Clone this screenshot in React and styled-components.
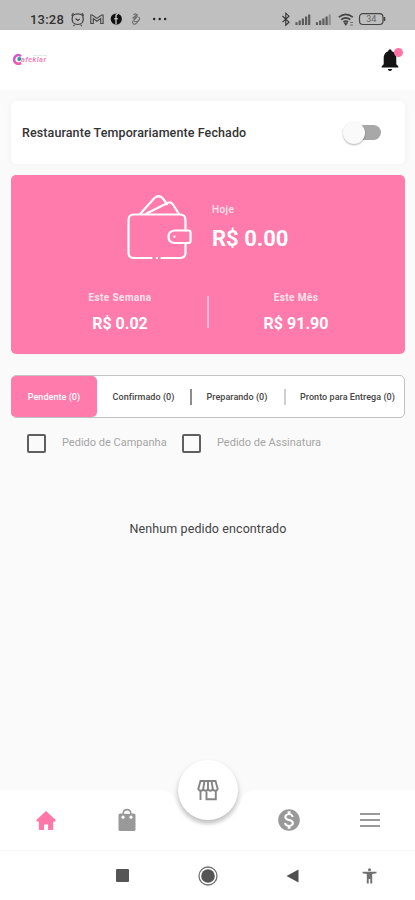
import styled, { createGlobalStyle } from "styled-components";
import { MdMonetizationOn } from "react-icons/md";

const App = () => {
  return (
    <>
      <GlobalStyle />
      <Screen>
        <StatusBar>
          <Clock>13:28</Clock>
          <StatusIcons />
        </StatusBar>
        <Header>
          <Logo />
          <Notification>
            <Bell />
            <Badge />
          </Notification>
        </Header>
        <Content>
          <ClosedCard>
            <span>Restaurante Temporariamente Fechado</span>
            <Switch>
              <Thumb />
            </Switch>
          </ClosedCard>
          <Wallet>
            <Today>
              <WalletIcon />
              <TodayInfo>
                <Label>Hoje</Label>
                <TodayValue>R$ 0.00</TodayValue>
              </TodayInfo>
            </Today>
            <Periods>
              <Period>
                <Label $bold>Este Semana</Label>
                <Value>R$ 0.02</Value>
              </Period>
              <Divider />
              <Period>
                <Label $bold>Este Mês</Label>
                <Value>R$ 91.90</Value>
              </Period>
            </Periods>
          </Wallet>
          <Tabs>
            <Tab $active $width={86}>Pendente (0)</Tab>
            <Tab $width={93}>Confirmado (0)</Tab>
            <Tab $width={94} $line="#8c8c8c">Preparando (0)</Tab>
            <Tab $width={127} $line="#cfcfcf">Pronto para Entrega (0)</Tab>
          </Tabs>
          <Filters>
            <Filter $width={155}>
              <Box />
              <span>Pedido de Campanha</span>
            </Filter>
            <Filter $width={150}>
              <Box />
              <span>Pedido de Assinatura</span>
            </Filter>
          </Filters>
          <Empty>Nenhum pedido encontrado</Empty>
        </Content>
        <BottomNav>
          <NavShape />
          <NavItem $active>
            <HomeIcon />
          </NavItem>
          <NavItem>
            <BagIcon />
          </NavItem>
          <NavItem />
          <NavItem>
            <MdMonetizationOn size={26} />
          </NavItem>
          <NavItem>
            <MenuIcon />
          </NavItem>
          <StoreButton>
            <StoreIcon />
          </StoreButton>
        </BottomNav>
        <SystemNav>
          <svg width="13" height="13">
            <rect width="13" height="13" rx="1" fill="#555" />
          </svg>
          <svg width="20" height="20">
            <circle cx="10" cy="10" r="9" fill="none" stroke="#707070" strokeWidth="1.3" />
            <circle cx="10" cy="10" r="6.800" fill="#555" />
          </svg>
          <svg width="13" height="14">
            <path d="M12.5 .5v13L.5 7z" fill="#505050" />
          </svg>
          <svg width="15" height="16" fill="#707070">
            <circle cx="7.5" cy="1.700" r="1.500" />
            <path d="M.5 3.800h14v1.500l-4.300.6v9.600H8.300V11H6.700v4.500H4.800V5.900L.5 5.300z" />
          </svg>
        </SystemNav>
      </Screen>
    </>
  );
};
export default App;

const StatusIcons = () => (
  <svg width="350" height="18" viewBox="65 10 350 18" fill="none" stroke="#444" strokeWidth="1.1">
    {/* alarm */}
    <path d="M72.800 15.500q-1.500 4 .2 7 1.700 2 4.700 2t4.700-2q1.700-3 .2-7-2-1.600-4.900-1.600t-4.900 1.600zM71.500 15.500l2-2.300M83.800 15.500l-2-2.300M74.500 25l-1 1M80.800 25l1 1M75.500 18.500l2.300 2 2-1.500" />
    {/* mail */}
    <path d="M90.800 15v8.500h2.500v-5l3.600 2.800 3.800-2.800v5h2.400V15h-1.500l-4.700 3.400-4.600-3.400z" />
    <circle cx="116.300" cy="19" r="5.600" fill="#111" stroke="none" />
    <path d="M116 24v-8q0-2 2-2M114.200 18.800h3.500" stroke="#bfbfbf" strokeWidth="1.4" />
    {/* linked loops */}
    <path d="M133.500 15q1.500-2 3-.5t0 3l-3 3M138.500 17q2 1.500.5 3l-3 3.500q-2 1.500-3 0t.3-2.800M132.500 18.300l5-4M134 21.500h4M136 16.500l-2.500 2" stroke="#707070" strokeWidth="1.200" />
    <g fill="#222" stroke="none">
      <circle cx="154.200" cy="19" r="1.200" />
      <circle cx="159.700" cy="19" r="1.200" />
      <circle cx="165.200" cy="19" r="1.200" />
    </g>
    {/* bluetooth */}
    <path d="M282.500 16l6.500 6.200-3.200 3V13.200l3.200 3-6.500 6" stroke="#333" />
    <g stroke="#5c5c5c" strokeWidth="2.200">
      <path d="M296.500 22.300V25M299.700 20.500V25M302.900 18.500V25M306.100 16.500V25M309.200 14.500V25" />
      <path d="M317 22.300V25M320.200 20.500V25M323.400 18.500V25M326.600 16.500V25" />
      <path d="M329.700 14.500V25" stroke="#909090" />
    </g>
    {/* wifi */}
    <path d="M338.800 17.200q7-5.600 14 0M341.200 19.700q4.600-3.700 9.200 0M343.500 22q2.400-1.800 4.600 0" stroke="#444" strokeWidth="1.700" />
    <path d="M344.500 23h2.600l-1.300 2z" fill="#444" />
    <path d="M350 22.500h3M350 25h3" stroke="#777" />
    {/* battery */}
    <rect x="359.500" y="13.700" width="23.500" height="10.800" rx="3.500" stroke="#444" strokeWidth="1.200" />
    <path d="M384.500 17v4" stroke="#444" strokeWidth="1.600" />
    <text x="371.300" y="22.400" fontSize="9" fontFamily="Roboto, sans-serif" textAnchor="middle" fill="#666" stroke="none">
      34
    </text>
  </svg>
);

const Logo = () => (
  <svg width="37" height="14" viewBox="0 0 37 14">
    <path d="M9 3.200Q6.500.8 3.800 3 .8 6 3 9.200q2.500 2.800 6 .8" fill="none" stroke="#d05ac6" strokeWidth="2.500" />
    <path d="M3 9.200q2.500 2.800 6 .8" fill="none" stroke="#f25ba8" strokeWidth="2.200" />
    <circle cx="7.300" cy="5.900" r="2" fill="#2f8fa8" />
    <path d="M21 2.500h14" stroke="#d8ece9" strokeWidth="1" />
    <text x="9" y="9.200" fontFamily="Roboto, sans-serif" fontSize="7.500" fontStyle="italic" fontWeight="500" fill="#ec77b4" textLength="25">
      afeklar
    </text>
  </svg>
);

const Bell = () => (
  <svg width="18" height="23" viewBox="0 0 18 23" fill="#141414">
    <path d="M9 .3q1.600 0 1.800 2 4.500 1.300 4.500 7v6l2 2v1.200H.7v-1.200l2-2v-6q0-5.700 4.500-7 .2-2 1.800-2z" />
    <path d="M6.700 20h4.600q-.6 2-2.300 2t-2.300-2z" />
  </svg>
);

const WalletIcon = () => (
  <svg width="66" height="66" viewBox="126 194 66 66" fill="none" stroke="#fff" strokeWidth="2.200" strokeLinecap="round" strokeLinejoin="round">
    <path d="M151.500 258H134q-5.500 0-5.500-5.500V220q0-5.500 5.500-5.500h46q5.500 0 5.500 5.500v10.500M185.500 243v9.500q0 5.500-5.500 5.500h-18.500M156.800 258h.3" />
    <path d="M174.500 230.500h14q2 0 2 2v8.500q0 2-2 2h-14q-6-.5-6-6.200t6-6.300zM174.300 236.700h.2" />
    <path d="M140.500 213.500l14-15.500q4.300-3.500 8 0l4.500 6M146.500 213.500l21.500-10.700q3-1.200 5 1.700l6 9.500" />
  </svg>
);

const HomeIcon = () => (
  <svg width="20" height="19" viewBox="0 0 20 19" fill="currentColor">
    <path d="M10 0l10 9.200-1 1.200h-1.800V18q0 1-1 1h-4.100v-5.500H8V19H3.800q-1 0-1-1v-7.600H1L0 9.200z" />
  </svg>
);

const BagIcon = () => (
  <svg width="20" height="24" viewBox="0 0 20 24">
    <path d="M3 5.500h14q1.500 0 1.500 1.500v14.500q0 1.500-1.500 1.500H3q-1.500 0-1.500-1.500V7Q1.500 5.500 3 5.500z" fill="#999" />
    <path d="M6.300 8V5.500q0-3.800 3.700-3.800t3.700 3.800V8" fill="none" stroke="#999" strokeWidth="1.800" />
    <path d="M7.200 5.700q0-2.300 2.800-2.300t2.800 2.300z" fill="#fff" />
    <circle cx="6" cy="9.200" r="1.600" fill="#fff" />
    <circle cx="14" cy="9.200" r="1.600" fill="#fff" />
  </svg>
);

const MenuIcon = () => (
  <svg width="20" height="16" fill="none" stroke="#999" strokeWidth="1.900">
    <path d="M0 2h20M0 8h20M0 14h20" />
  </svg>
);

const StoreIcon = () => (
  <svg width="22" height="22" viewBox="0 0 22 22" fill="none" stroke="#858585" strokeWidth="1.900">
    <path d="M3.500 2h15l2.200 8q-.8 1.800-2.400 1.800T15.800 10q-.8 1.800-2.400 1.800T11 10q-.8 1.800-2.400 1.800T6.200 10q-.8 1.800-2.400 1.800T1.300 10zM7.500 2L6.200 10M11 2V10M14.500 2l1.300 8" />
    <path d="M3.500 12v9M9.500 12.500v7.700h9.300V12" />
  </svg>
);

const NavShape = () => (
  <NavBackground width="415" height="60" viewBox="0 0 415 60">
    <path d="M0 0h159q11 0 15 8 9 27 34 27t34-27q4-8 15-8h158v60H0z" fill="#fff" />
  </NavBackground>
);

const GlobalStyle = createGlobalStyle`
  * {
    box-sizing: border-box;
  }
  body {
    margin: 0;
    background-color: #fafafa;
    font-family: Roboto, sans-serif;
  }
`;
const Screen = styled.div`
  width: 415px;
  height: 900px;
  display: flex;
  flex-direction: column;
  overflow: hidden;
  background-color: #fafafa;
`;
const StatusBar = styled.div`
  height: 30px;
  flex-shrink: 0;
  padding-top: 10px;
  padding-left: 30px;
  display: flex;
  background-color: #bfbfbf;
`;
const Clock = styled.span`
  width: 35px;
  flex-shrink: 0;
  font-size: 13px;
  font-weight: 500;
  line-height: 19px;
  letter-spacing: 0.2px;
  color: #333;
`;
const Header = styled.div`
  height: 60px;
  flex-shrink: 0;
  padding: 0 16px 0 12px;
  display: flex;
  justify-content: space-between;
  align-items: center;
  background-color: #fff;
`;
const Notification = styled.div`
  position: relative;
  height: 23px;
`;
const Badge = styled.div`
  position: absolute;
  top: -1px;
  right: -4px;
  width: 9px;
  height: 9px;
  border-radius: 50%;
  background-color: #ff73a5;
`;
const Content = styled.div`
  flex: 1;
  padding: 11px 10px 0 11px;
`;
const ClosedCard = styled.div`
  height: 63px;
  padding: 0 24px 0 11px;
  display: flex;
  justify-content: space-between;
  align-items: center;
  border-radius: 5px;
  background-color: #fff;
  box-shadow: 0 0 7px rgba(0, 0, 0, 0.04);
  font-size: 12.5px;
  color: #333;
  span {
    font-weight: 500;
    letter-spacing: 0.1px;
  }
`;
const Switch = styled.div`
  width: 33px;
  height: 15px;
  display: flex;
  align-items: center;
  border-radius: 8px;
  background-color: #a8a8a8;
`;
const Thumb = styled.div`
  width: 22px;
  height: 22px;
  flex-shrink: 0;
  margin-left: -5px;
  border-radius: 50%;
  background-color: #fafafa;
  box-shadow: 0 1px 2px rgba(0, 0, 0, 0.3);
`;
const Wallet = styled.div`
  height: 179px;
  margin-top: 11px;
  padding-top: 19px;
  border-radius: 5px;
  background-color: #ff7bab;
  color: #fff;
`;
const Today = styled.div`
  display: flex;
  padding-left: 115px;
`;
const TodayInfo = styled.div`
  padding-top: 9px;
  padding-left: 20px;
`;
const Label = styled.div`
  font-size: 10px;
  line-height: 14px;
  font-weight: ${({ $bold }) => ($bold ? 700 : 500)};
  letter-spacing: 0.4px;
  color: #ffe2ed;
`;
const TodayValue = styled.div`
  margin-top: 8px;
  font-size: 22px;
  line-height: 28px;
  font-weight: 700;
`;
const Periods = styled.div`
  margin-top: 31px;
  display: flex;
  justify-content: center;
`;
const Period = styled.div`
  width: 174px;
  text-align: center;
`;
const Value = styled.div`
  margin-top: 8px;
  font-size: 16px;
  line-height: 21px;
  font-weight: 700;
`;
const Divider = styled.div`
  width: 2px;
  height: 32px;
  margin-top: 5px;
  background-color: #ffb9d2;
`;
const Tabs = styled.div`
  height: 43px;
  margin-top: 21px;
  display: flex;
  border: 1px solid #c2c2c2;
  border-radius: 5px;
  background-color: #fff;
`;
const Tab = styled.div`
  width: ${({ $width }) => $width}px;
  flex-shrink: 0;
  margin-left: ${({ $active }) => ($active ? "-1px" : "0")};
  display: flex;
  justify-content: center;
  align-items: center;
  position: relative;
  border-radius: 5px;
  background-color: ${({ $active }) => ($active ? "#ff7bab" : "transparent")};
  color: ${({ $active }) => ($active ? "#fff" : "#444")};
  font-size: 9px;
  font-weight: 500;
  letter-spacing: 0.05px;
  white-space: nowrap;
  &::before {
    content: "";
    display: ${({ $line }) => ($line ? "block" : "none")};
    position: absolute;
    left: 0;
    width: 2px;
    height: 16px;
    background-color: ${({ $line }) => $line};
  }
`;
const Filters = styled.div`
  margin-top: 15px;
  padding-left: 16px;
  display: flex;
`;
const Filter = styled.div`
  width: ${({ $width }) => $width}px;
  display: flex;
  align-items: center;
  gap: 16px;
  font-size: 11px;
  line-height: 20px;
  white-space: nowrap;
  color: #a5a5a5;
`;
const Box = styled.div`
  width: 19px;
  height: 19px;
  flex-shrink: 0;
  border: 2px solid #5f5f5f;
  border-radius: 2px;
`;
const Empty = styled.div`
  margin-top: 66px;
  text-align: center;
  font-size: 12.5px;
  line-height: 20px;
  letter-spacing: 0.1px;
  color: #444;
`;
const BottomNav = styled.div`
  position: relative;
  height: 60px;
  flex-shrink: 0;
  padding: 0 5px;
  display: flex;
`;
const NavBackground = styled.svg`
  position: absolute;
  top: 0;
  left: 0;
`;
const NavItem = styled.div`
  position: relative;
  flex: 1;
  display: flex;
  justify-content: center;
  align-items: center;
  color: ${({ $active }) => ($active ? "#ff78a9" : "#999")};
`;
const StoreButton = styled.div`
  position: absolute;
  top: -30px;
  left: 178px;
  width: 60px;
  height: 60px;
  display: flex;
  justify-content: center;
  align-items: center;
  border-radius: 50%;
  background-color: #fff;
  box-shadow: 0 3px 5px rgba(0, 0, 0, 0.26);
`;
const SystemNav = styled.div`
  height: 50px;
  flex-shrink: 0;
  padding-left: 79px;
  display: grid;
  grid-template-columns: 86px 86px 83px 71px;
  justify-items: center;
  align-items: center;
  border-top: 1px solid #f7f7f7;
  background-color: #fff;
`;
